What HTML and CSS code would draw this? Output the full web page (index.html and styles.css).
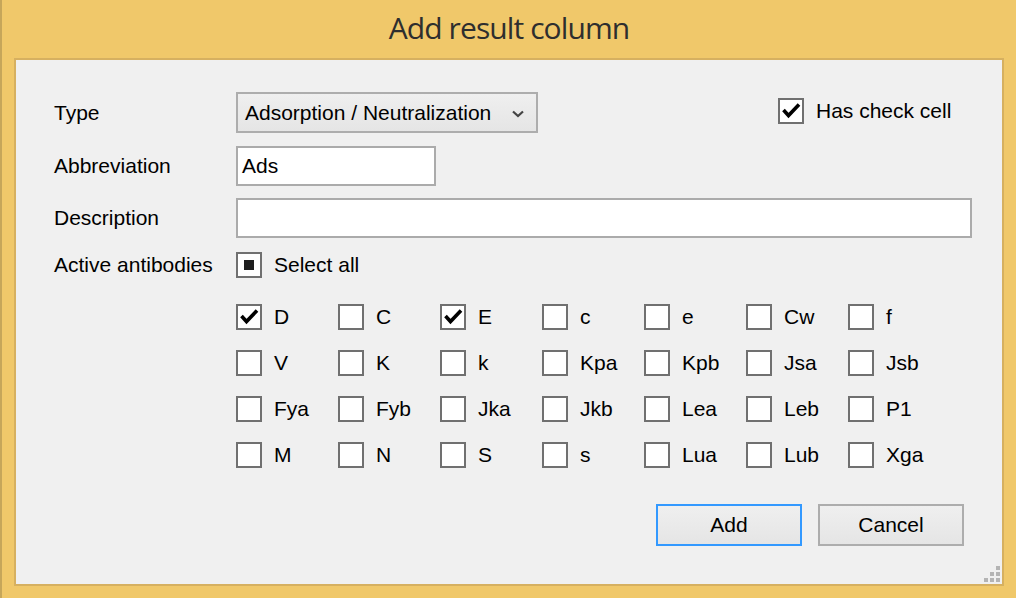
FILE: index.html
```html
<!DOCTYPE html>
<html>
<head>
<meta charset="utf-8">
<title>Add result column</title>
<link rel="stylesheet" href="styles.css">
</head>
<body>
<div class="window">
  <div class="titlebar">Add result column</div>
  <div class="client">
    <div class="form">
      <div class="row row-type">
        <span class="label">Type</span>
        <div class="combo">
          <span class="combo-text">Adsorption / Neutralization</span>
          <svg class="chevron" width="12" height="8" viewBox="0 0 12 8"><path d="M1 1.5 L6 6 L11 1.5" fill="none" stroke="#444" stroke-width="2.2"/></svg>
        </div>
        <div class="check check-has">
          <span class="box"><svg viewBox="0 0 22 22" width="22" height="22"><path d="M3.5 10 L8.5 15.5 L19 4.5" fill="none" stroke="#000" stroke-width="3.6"/></svg></span>
          <span class="check-label">Has check cell</span>
        </div>
      </div>
      <div class="row row-abbr">
        <span class="label">Abbreviation</span>
        <div class="textbox abbr">Ads</div>
      </div>
      <div class="row row-desc">
        <span class="label">Description</span>
        <div class="textbox desc"></div>
      </div>
      <div class="row row-active">
        <span class="label">Active antibodies</span>
        <div class="check">
          <span class="box"><span class="indeterminate"></span></span>
          <span class="check-label">Select all</span>
        </div>
      </div>
      <div class="grid">
        <div class="check"><span class="box"><svg viewBox="0 0 22 22" width="22" height="22"><path d="M3.5 10 L8.5 15.5 L19 4.5" fill="none" stroke="#000" stroke-width="3.6"/></svg></span><span class="check-label">D</span></div>
        <div class="check"><span class="box"></span><span class="check-label">C</span></div>
        <div class="check"><span class="box"><svg viewBox="0 0 22 22" width="22" height="22"><path d="M3.5 10 L8.5 15.5 L19 4.5" fill="none" stroke="#000" stroke-width="3.6"/></svg></span><span class="check-label">E</span></div>
        <div class="check"><span class="box"></span><span class="check-label">c</span></div>
        <div class="check"><span class="box"></span><span class="check-label">e</span></div>
        <div class="check"><span class="box"></span><span class="check-label">Cw</span></div>
        <div class="check"><span class="box"></span><span class="check-label">f</span></div>

        <div class="check"><span class="box"></span><span class="check-label">V</span></div>
        <div class="check"><span class="box"></span><span class="check-label">K</span></div>
        <div class="check"><span class="box"></span><span class="check-label">k</span></div>
        <div class="check"><span class="box"></span><span class="check-label">Kpa</span></div>
        <div class="check"><span class="box"></span><span class="check-label">Kpb</span></div>
        <div class="check"><span class="box"></span><span class="check-label">Jsa</span></div>
        <div class="check"><span class="box"></span><span class="check-label">Jsb</span></div>

        <div class="check"><span class="box"></span><span class="check-label">Fya</span></div>
        <div class="check"><span class="box"></span><span class="check-label">Fyb</span></div>
        <div class="check"><span class="box"></span><span class="check-label">Jka</span></div>
        <div class="check"><span class="box"></span><span class="check-label">Jkb</span></div>
        <div class="check"><span class="box"></span><span class="check-label">Lea</span></div>
        <div class="check"><span class="box"></span><span class="check-label">Leb</span></div>
        <div class="check"><span class="box"></span><span class="check-label">P1</span></div>

        <div class="check"><span class="box"></span><span class="check-label">M</span></div>
        <div class="check"><span class="box"></span><span class="check-label">N</span></div>
        <div class="check"><span class="box"></span><span class="check-label">S</span></div>
        <div class="check"><span class="box"></span><span class="check-label">s</span></div>
        <div class="check"><span class="box"></span><span class="check-label">Lua</span></div>
        <div class="check"><span class="box"></span><span class="check-label">Lub</span></div>
        <div class="check"><span class="box"></span><span class="check-label">Xga</span></div>
      </div>
      <div class="buttons">
        <div class="button default">Add</div>
        <div class="button">Cancel</div>
      </div>
    </div>
    <svg class="grip" width="16" height="16" viewBox="0 0 16 16">
      <rect x="12" y="0" width="4" height="4" fill="#b4b4b4"/>
      <rect x="6" y="6" width="4" height="4" fill="#b4b4b4"/>
      <rect x="12" y="6" width="4" height="4" fill="#b4b4b4"/>
      <rect x="0" y="12" width="4" height="4" fill="#b4b4b4"/>
      <rect x="6" y="12" width="4" height="4" fill="#b4b4b4"/>
      <rect x="12" y="12" width="4" height="4" fill="#b4b4b4"/>
    </svg>
  </div>
</div>
</body>
</html>
```

FILE: styles.css
```css
html, body {
  margin: 0;
  padding: 0;
  width: 1016px;
  height: 598px;
  overflow: hidden;
  background: #f0c86a;
}

.window {
  box-sizing: border-box;
  width: 1016px;
  height: 598px;
  background: #f0c86a;
  border-left: 2px solid #c6a65a;
  padding: 0 12px 12px 12px;
  display: flex;
  flex-direction: column;
}

.titlebar {
  height: 58px;
  box-sizing: border-box;
  padding-top: 10px;
  font-family: "Open Sans", "Noto Sans", sans-serif;
  font-size: 30px;
  line-height: 36px;
  letter-spacing: -0.9px;
  color: #2e2e2e;
  text-align: center;
}

.client {
  position: relative;
  box-sizing: border-box;
  width: 990px;
  height: 528px;
  background: #f0f0f0;
  border: 2px solid #d6b060;
  font-family: "Liberation Sans", Arial, sans-serif;
  font-size: 21px;
  color: #000;
}

.form {
  padding: 32px 0 0 38px;
  display: flex;
  flex-direction: column;
}

.row {
  display: flex;
  align-items: center;
}

.label {
  width: 182px;
  flex: none;
  white-space: nowrap;
}

.row-type { height: 41px; }
.row-abbr { height: 40px; margin-top: 13px; }
.row-desc { height: 40px; margin-top: 12px; }
.row-active { height: 26px; margin-top: 14px; }

.combo {
  box-sizing: border-box;
  width: 302px;
  height: 41px;
  border: 2px solid #adadad;
  background: linear-gradient(#efefef, #e5e5e5);
  display: flex;
  align-items: center;
  padding: 0 12px 0 7px;
}

.combo-text {
  flex: 1;
  white-space: nowrap;
}

.chevron {
  display: block;
  margin-top: 2px;
}

.textbox {
  box-sizing: border-box;
  height: 40px;
  border: 2px solid #abadb3;
  border-color: #ababab;
  background: #fff;
  display: flex;
  align-items: center;
  padding-left: 4px;
}

.abbr { width: 200px; }
.desc { width: 736px; }

.check {
  display: flex;
  align-items: center;
  white-space: nowrap;
}

.box {
  box-sizing: border-box;
  width: 26px;
  height: 26px;
  flex: none;
  border: 2px solid #707070;
  background: #fff;
  display: flex;
  align-items: center;
  justify-content: center;
}

.box svg {
  display: block;
}

.check-label {
  margin-left: 12px;
}

.indeterminate {
  width: 10px;
  height: 10px;
  background: #1e1e1e;
}

.check-has {
  margin-left: 240px;
  margin-bottom: 4px;
}

.grid {
  margin-top: 26px;
  margin-left: 182px;
  display: grid;
  grid-template-columns: repeat(7, 102px);
  row-gap: 20px;
}

.buttons {
  margin-top: 36px;
  padding-right: 38px;
  display: flex;
  justify-content: flex-end;
  gap: 16px;
}

.button {
  box-sizing: border-box;
  width: 146px;
  height: 42px;
  border: 2px solid #adadad;
  background: linear-gradient(#efefef, #e5e5e5);
  display: flex;
  align-items: center;
  justify-content: center;
}

.button.default {
  border-color: #3399ff;
}

.grip {
  position: absolute;
  right: 2px;
  bottom: 2px;
  display: block;
}
```
